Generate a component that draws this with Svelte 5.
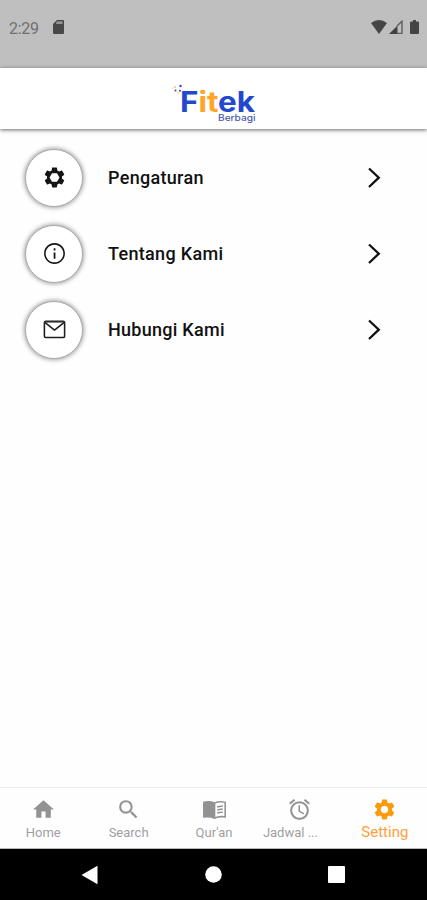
<script>
  const gear = 'M19.14 12.94c.04-.3.06-.61.06-.94 0-.32-.02-.64-.07-.94l2.03-1.58a.49.49 0 0 0 .12-.61l-1.92-3.32a.488.488 0 0 0-.59-.22l-2.39.96c-.5-.38-1.03-.7-1.62-.94l-.36-2.54a.484.484 0 0 0-.48-.41h-3.84c-.24 0-.43.17-.47.41l-.36 2.54c-.59.24-1.13.57-1.62.94l-2.39-.96c-.22-.08-.47 0-.59.22L2.74 8.87c-.12.21-.08.47.12.61l2.03 1.58c-.05.3-.09.63-.09.94s.02.64.07.94l-2.03 1.58a.49.49 0 0 0-.12.61l1.92 3.32c.12.22.37.29.59.22l2.39-.96c.5.38 1.03.7 1.62.94l.36 2.54c.05.24.24.41.48.41h3.84c.24 0 .44-.17.47-.41l.36-2.54c.59-.24 1.13-.56 1.62-.94l2.39.96c.22.08.47 0 .59-.22l1.92-3.32c.12-.22.07-.47-.12-.61l-2.01-1.58zM12 15.6c-1.98 0-3.6-1.62-3.6-3.6s1.62-3.6 3.6-3.6 3.6 1.62 3.6 3.6-1.62 3.6-3.6 3.6z';
  const rows = [
    { label: 'Pengaturan', icon: 'gear', width: 95.5 },
    { label: 'Tentang Kami', icon: 'info', width: 115 },
    { label: 'Hubungi Kami', icon: 'mail', width: 116.5 }
  ];
  const tabs = [
    { label: 'Home', icon: 'home' },
    { label: 'Search', icon: 'search' },
    { label: "Qur'an", icon: 'book' },
    { label: 'Jadwal ...', icon: 'alarm' },
    { label: 'Setting', icon: 'gear', active: true }
  ];
</script>

<div class="screen">
  <div class="status">
    <span class="time">2:29</span>
    <svg class="sd" width="11" height="14" viewBox="0 0 11 14"><path d="M4 0h6a1 1 0 0 1 1 1v12a1 1 0 0 1-1 1H1a1 1 0 0 1-1-1V4z" fill="#484848"/><path d="M4.300 1.300h5.200v2.700H3V2.700z" fill="#929292"/></svg>
    <div class="signals">
      <svg width="16" height="14" viewBox="0 0 16 14"><path d="M0 3Q8-3 16 3L8 14z" fill="#454545"/></svg>
      <svg width="14" height="14" viewBox="0 0 14 14"><path d="M0 14L8.500 5.500V14z" fill="#424242"/><path d="M8 6L13 1.200v12.200H8" fill="none" stroke="#606060" stroke-width="1.400"/></svg>
      <svg width="9" height="14" viewBox="0 0 9 14"><path d="M3 0h3v1.500h2a1 1 0 0 1 1 1V13a1 1 0 0 1-1 1H1a1 1 0 0 1-1-1V2.500a1 1 0 0 1 1-1h2z" fill="#444"/></svg>
    </div>
  </div>
  <header>
    <svg class="logo" width="90" height="44" viewBox="0 0 90 44">
      <g fill="#2448cd">
        <circle cx="11.500" cy="6" r="1.200"/><circle cx="6.500" cy="10.500" r="1"/><circle cx="11" cy="10.800" r="1"/>
      </g>
      <g fill="#f6b565"><circle cx="6" cy="7" r=".9"/><circle cx="3.500" cy="8" r=".6"/><circle cx="9" cy="13" r=".8"/></g>
      <text x="11" y="32" class="brand" textLength="75" lengthAdjust="spacingAndGlyphs">F<tspan fill="#ffa52c">it</tspan>ek</text>
      <text x="49" y="40.800" class="sub" textLength="37.500" lengthAdjust="spacingAndGlyphs">Berbagi</text>
    </svg>
  </header>
  <main>
    {#each rows as row}
      <div class="row">
        <div class="disc">
          {#if row.icon === 'gear'}
            <svg width="25" height="25" viewBox="0 0 24 24"><path d={gear} fill="#151515"/><path d="M9.600 7.900h4.800l2.400 4.100-2.400 4.100H9.600L7.200 12z" fill="#fff"/></svg>
          {:else if row.icon === 'info'}
            <svg width="25" height="25" viewBox="0 0 24 24"><path fill="#151515" d="M11.200 7h1.700v2h-1.700zm0 4h1.700v6h-1.700zM12 2C6.480 2 2 6.480 2 12s4.480 10 10 10 10-4.480 10-10S17.520 2 12 2zm0 18.500c-4.700 0-8.500-3.800-8.500-8.500S7.300 3.500 12 3.500s8.500 3.800 8.500 8.500-3.800 8.500-8.500 8.500z"/></svg>
          {:else}
            <svg width="25" height="25" viewBox="0 0 24 24" fill="none" stroke="#1d1d1d" stroke-width="1.500" stroke-linejoin="round"><rect x="2.300" y="4.100" width="19.400" height="15.600" rx="1.200"/><path d="M2.500 5h19" stroke="#555" stroke-width="1"/><path d="M3 5.500l9 7 9-7"/></svg>
          {/if}
        </div>
        <svg class="label" width="125" height="26"><text x="0" y="18.500" textLength={row.width} lengthAdjust="spacing">{row.label}</text></svg>
        <svg class="chevron" width="14" height="22" viewBox="0 0 14 22"><path d="M2 1.500L11.800 10.700 2 20" fill="none" stroke="#111" stroke-width="2.300"/></svg>
      </div>
    {/each}
  </main>
  <nav>
    {#each tabs as tab}
      <div class="tab" class:active={tab.active}>
        <svg width="25" height="25" viewBox="0 0 24 24" fill="currentColor">
          {#if tab.icon === 'home'}
            <path d="M10 20v-6h4v6h5v-8h3L12 3 2 12h3v8z"/>
          {:else if tab.icon === 'search'}
            <path d="M15.500 14h-.79l-.28-.27A6.471 6.471 0 0 0 16 9.500 6.500 6.500 0 1 0 9.500 16c1.610 0 3.090-.59 4.230-1.570l.27.28v.79l5 4.990L20.490 19l-4.990-5zm-6 0C7.010 14 5 11.990 5 9.500S7.010 5 9.500 5 14 7.010 14 9.500 11.990 14 9.500 14z"/>
          {:else if tab.icon === 'book'}
            <path d="M1 4.600Q7 2.900 12 5q5-2.100 11-.4V20q-6-1-11 1-5-2-11-1zM12.800 6.200v12.900q4-1.400 8.700-.9V5.600q-5-.8-8.700.6z" fill-rule="evenodd"/>
            <path d="M14.500 9.600q2.600-1 5.500-.7M14.500 12.500q2.600-1 5.500-.7M14.500 15.400q2.600-1 5.500-.7" fill="none" stroke="currentColor" stroke-width="1.300"/>
          {:else if tab.icon === 'alarm'}
            <path d="M22 5.720l-4.600-3.860-1.290 1.530 4.600 3.860L22 5.720zM7.880 3.390L6.600 1.860 2 5.710l1.290 1.530 4.590-3.850zM12.500 8H11v6l4.750 2.850.75-1.230-4-2.370V8zM12 4a9 9 0 1 0 0 18 9 9 0 0 0 0-18zm0 16c-3.870 0-7-3.130-7-7s3.130-7 7-7 7 3.130 7 7-3.130 7-7 7z"/>
          {:else}
            <path d={gear}/>
          {/if}
        </svg>
        <span class:clipped={tab.icon === 'alarm'}>{tab.label}</span>
      </div>
    {/each}
  </nav>
  <footer>
    <svg width="17" height="20" viewBox="0 0 17 20"><path d="M.5 10L16.500 .8v18.400z" fill="#fff"/></svg>
    <svg width="17" height="17" viewBox="0 0 17 17"><circle cx="8.500" cy="8.500" r="8.300" fill="#fff"/></svg>
    <svg width="17" height="17" viewBox="0 0 17 17"><rect width="17" height="17" rx="1" fill="#fff"/></svg>
  </footer>
</div>

<style>
  .screen { width: 427px; height: 900px; display: flex; flex-direction: column; background: #fefefe; font-family: Roboto, "Liberation Sans", sans-serif; overflow: hidden; }
  .status { height: 67.500px; flex: none; box-sizing: border-box; padding: 20px 8px 0 9px; display: flex; align-items: flex-start; background: #bfbfbf; }
  .time { font-size: 16px; line-height: 17px; color: #707070; width: 44px; letter-spacing: -.3px; }
  .sd { display: block; }
  .signals { margin-left: auto; display: flex; }
  .signals svg { display: block; }
  .signals svg:nth-child(2) { margin-left: 2px; }
  .signals svg:nth-child(3) { margin-left: 7px; }
  header { flex: none; height: 61.500px; box-sizing: border-box; padding: 12px 0 0 169px; background: #fff; box-shadow: 0 1px 4px rgba(0,0,0,.6); }
  .logo { display: block; }
  .brand { font: 700 28px Inter, Roboto, sans-serif; fill: #2448cd; }
  .sub { font: 500 9px Inter, Roboto, sans-serif; fill: #4a5ab0; }
  main { flex: 1; padding-top: 20px; }
  .row { height: 58px; margin-bottom: 18px; padding: 0 46px 0 25px; display: flex; align-items: center; }
  .disc { width: 58px; height: 58px; box-sizing: border-box; border: 1.500px solid #aaa; border-radius: 50%; display: flex; align-items: center; justify-content: center; background: #fff; box-shadow: 0 0 4px 1px rgba(0,0,0,.36); }
  .disc svg { display: block; margin: 0 0 1px 0; }
  .label { margin-left: 25px; font-size: 18px; font-weight: 500; fill: #111; }
  .chevron { margin-left: auto; }
  nav { flex: none; height: 62px; box-sizing: border-box; border-top: 1px solid #eee; border-bottom: 1px solid #bbb; display: flex; background: #fefefe; }
  .tab { flex: 1; display: flex; flex-direction: column; align-items: center; padding: 9px 0 0 1px; color: #929292; }
  .tab span { margin-top: 3px; font-size: 13px; line-height: 16px; white-space: nowrap; color: #a0a0a0; }
  .tab .clipped { margin-right: 18px; }
  .tab.active { color: #fc9a0a; }
  .tab.active span { margin-top: 2px; font-size: 15px; color: #ffa13a; }
  footer { flex: none; height: 51px; background: #000; display: flex; align-items: center; justify-content: space-between; padding: 0 82px 0 81px; }
</style>
